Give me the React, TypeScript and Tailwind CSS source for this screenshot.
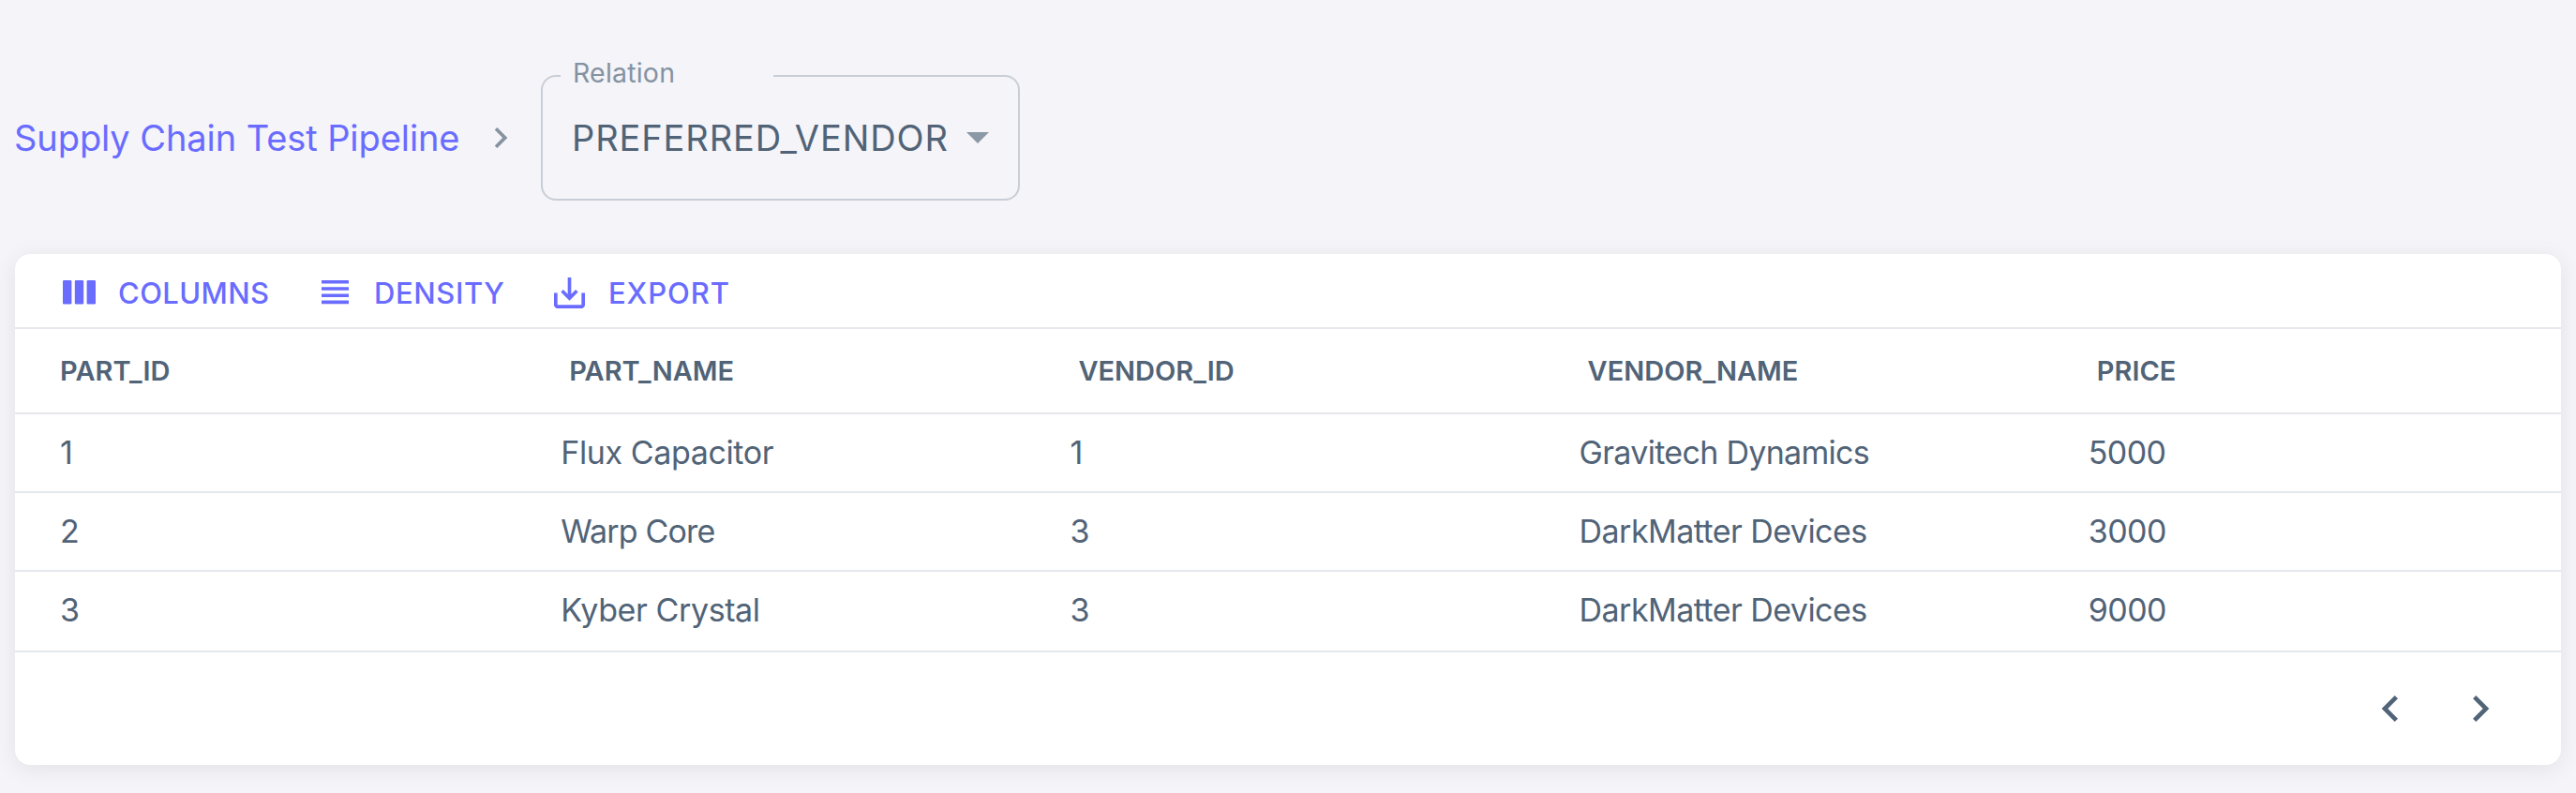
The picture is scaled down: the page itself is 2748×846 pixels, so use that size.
import React from 'react'

const chevronRight = 'M10 6 8.59 7.41 13.17 12l-4.58 4.59L10 18l6-6z'
const chevronLeft = 'M15.41 7.41 14 6l-6 6 6 6 1.41-1.41L10.83 12z'

function Icon({ d, className }: { d: string; className: string }) {
  return (
    <svg viewBox="0 0 24 24" fill="currentColor" className={className}>
      <path d={d} />
    </svg>
  )
}

const headers = ['PART_ID', 'PART_NAME', 'VENDOR_ID', 'VENDOR_NAME', 'PRICE']

const rows = [
  { size: 'h-[84px] pb-[2px]', cells: ['1', 'Flux Capacitor', '1', 'Gravitech Dynamics', '5000'] },
  { size: 'h-[84px] pb-[2px]', cells: ['2', 'Warp Core', '3', 'DarkMatter Devices', '3000'] },
  { size: 'h-[86px] pb-[3px]', cells: ['3', 'Kyber Crystal', '3', 'DarkMatter Devices', '9000'] },
]

const tracking: Record<string, string> = {
  'Flux Capacitor': 'tracking-[-0.38px]',
  'Warp Core': 'tracking-[-0.85px]',
  'Kyber Crystal': 'tracking-[-0.4px]',
  'Gravitech Dynamics': 'tracking-[-0.7px]',
  'DarkMatter Devices': 'tracking-[-0.55px]',
}

const columnPad = ['pl-[48px]', 'pl-[39px]', 'pl-[39px]', 'pl-[39px]', 'pl-[39px] tracking-[-0.6px]']

export default function App() {
  return (
    <div className="h-[846px] w-[2748px] overflow-hidden bg-[#f4f4f9] font-['Inter',sans-serif] text-[#516377]">
      <div className="flex h-[271px] items-start pl-[15px] pt-[80px]">
        <a className="mt-[42px] w-[497px] whitespace-nowrap text-[38px] leading-[50px] tracking-[-0.08px] text-[#696cff]">Supply Chain Test Pipeline</a>
        <Icon d={chevronRight} className="mt-[45px] h-11 w-11 text-[#8592a0]" />
        <fieldset className="relative ml-[21px] flex h-[134px] w-[511px] items-center rounded-2xl border-2 border-[#c9ced6]">
          <span className="absolute -top-[2px] left-[19px] h-[2px] w-[227px] bg-[#f4f4f9]" />
          <span className="absolute -top-[24px] left-[32px] text-[28.5px] leading-[40px] tracking-[0.2px] text-[#8592a0]">Relation</span>
          <span className="w-[420px] pl-[31px] text-[38px] leading-[50px] tracking-[0.9px]">PREFERRED_VENDOR</span>
          <svg viewBox="0 0 24 12" className="ml-[32px] h-3 w-6 text-[#8b98a6]" fill="currentColor">
            <path d="M0 0h24L12 12z" />
          </svg>
        </fieldset>
      </div>
      <div className="mx-4 h-[545px] rounded-2xl bg-white shadow-[0_4px_24px_rgba(0,0,0,0.08)]">
        <div className="flex h-[80px] items-center border-b-2 border-[#e7e7ed] pl-[51px] pt-1 text-[31px] font-medium text-[#696cff]">
          <svg viewBox="0 0 35 26" className="h-[26px] w-[35px]" fill="currentColor">
            <rect width="9.4" height="25.6" rx="1.3" />
            <rect x="12.8" width="9.4" height="25.6" rx="1.3" />
            <rect x="25.6" width="9.4" height="25.6" rx="1.3" />
          </svg>
          <span className="w-[241px] pl-[24px] pt-[2px] tracking-[0.4px]">COLUMNS</span>
          <svg viewBox="0 0 29 26" className="h-[26px] w-[29px]" fill="currentColor">
            <path d="M0 0h29v3.6H0zM0 7.2h29v3.6H0zM0 14.4h29v3.6H0zM0 21.6h29v3.7H0z" />
          </svg>
          <span className="w-[219px] pl-[27px] pt-[2px] tracking-[0.6px]">DENSITY</span>
          <svg viewBox="3 3 18 18" className="h-[33px] w-[33px]" fill="currentColor">
            <path d="M19 12v7H5v-7H3v7c0 1.1.9 2 2 2h14c1.1 0 2-.9 2-2v-7h-2zm-6 .67l2.59-2.58L17 11.5l-5 5-5-5 1.41-1.41L11 12.67V3h2z" />
          </svg>
          <span className="pl-[25px] pt-[2px] tracking-[0.9px]">EXPORT</span>
        </div>
        <div className="grid h-[91px] grid-cols-5 items-center border-b-2 border-[#e7e7ed] text-[29px] font-semibold">
          {headers.map((h) => (
            <span key={h} className="pl-[48px]">{h}</span>
          ))}
        </div>
        {rows.map((r, i) => (
          <div key={i} className={`grid grid-cols-5 items-center border-b-2 border-[#e4e8ed] text-[34px] ${r.size}`}>
            {r.cells.map((c, j) => (
              <span key={j} className={`${columnPad[j]} ${tracking[c] ?? ''}`}>{c}</span>
            ))}
          </div>
        ))}
        <div className="flex h-[120px] items-center justify-end pr-[58px]">
          <Icon d={chevronLeft} className="h-14 w-14" />
          <Icon d={chevronRight} className="ml-10 h-14 w-14" />
        </div>
      </div>
    </div>
  )
}
